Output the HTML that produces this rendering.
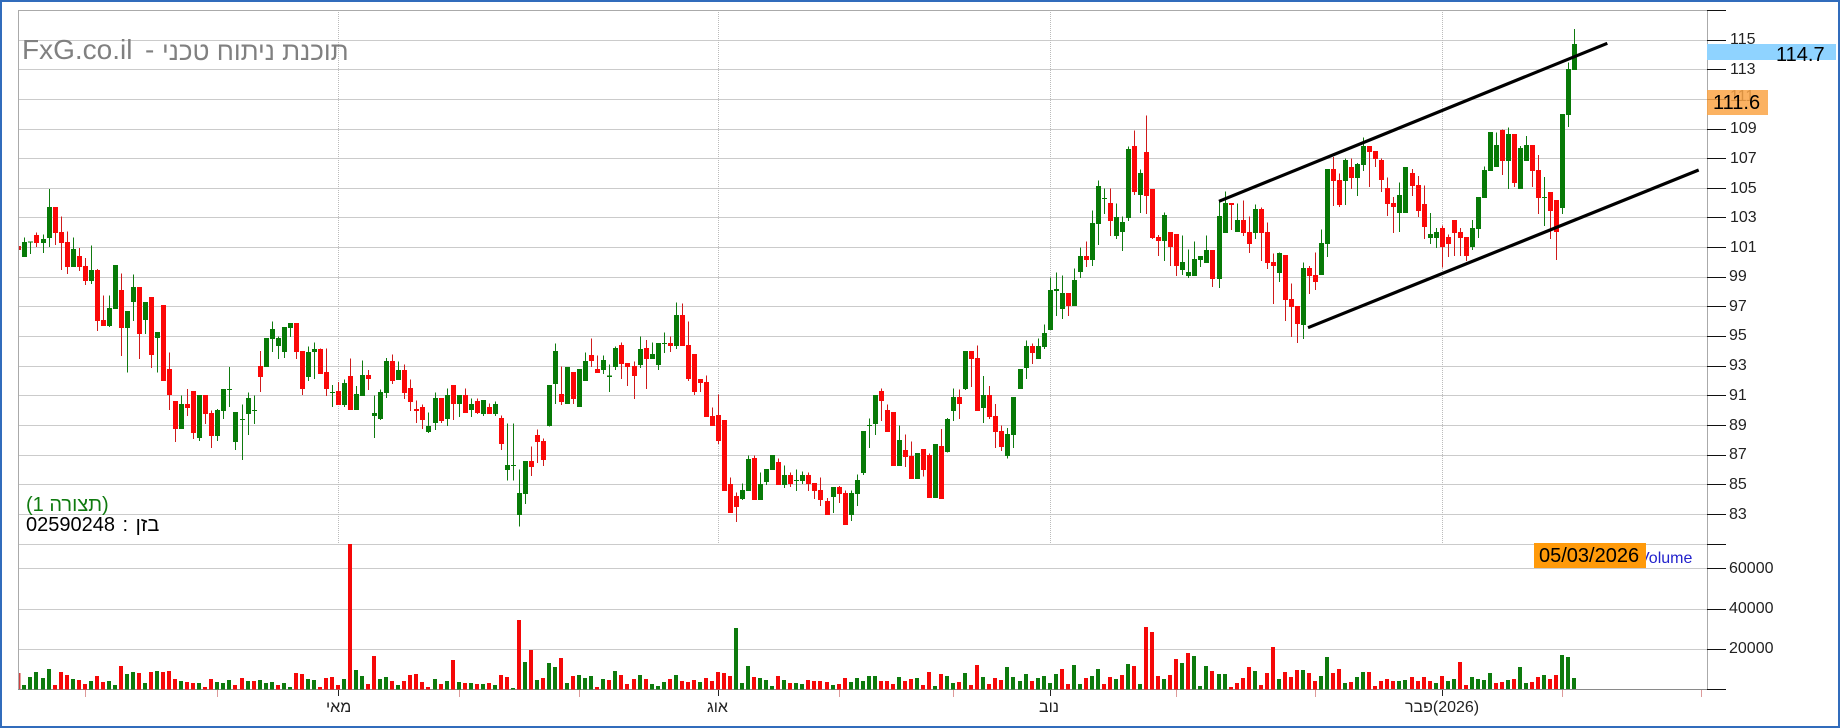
<!DOCTYPE html>
<html lang="he"><head><meta charset="utf-8"><title>FxG.co.il</title>
<style>
html,body{margin:0;padding:0;background:#fff}
#w{position:relative;width:1840px;height:728px;overflow:hidden;background:#fff;font-family:"Liberation Sans","Noto Sans CJK JP",sans-serif}
#f{position:absolute;left:0;top:0;width:1840px;height:728px;box-sizing:border-box;border:2px solid #316cbc}
svg{position:absolute;left:0;top:0}
.t{position:absolute;white-space:nowrap;line-height:24px;height:24px;color:#222;font-size:16px}
.b{position:absolute}
</style></head><body><div id="w">
<svg width="1840" height="728" viewBox="0 0 1840 728" fill="none">
<path shape-rendering="crispEdges" stroke="#cbcbcb" d="M18 40.5H1707M18 69.5H1707M18 99.5H1707M18 129.5H1707M18 158.5H1707M18 188.5H1707M18 217.5H1707M18 247.5H1707M18 277.5H1707M18 306.5H1707M18 336.5H1707M18 366.5H1707M18 395.5H1707M18 425.5H1707M18 455.5H1707M18 484.5H1707M18 514.5H1707M18 544.5H1707M18 568.5H1707M18 609.5H1707M18 649.5H1707"/>
<path shape-rendering="crispEdges" stroke="#bbb" stroke-dasharray="1 1" d="M338.5 10V544M718.5 10V544M1050.5 10V544M1442.5 10V544"/>
<path shape-rendering="crispEdges" stroke="#aaa" d="M18 10.5H1707M18.5 10V689M1707.5 10V689"/>
<path shape-rendering="crispEdges" stroke="#8a8a8a" d="M18 689.5H1707"/>
<path shape-rendering="crispEdges" stroke="#111" d="M1707 10.5H1726M1707 40.5H1726M1707 69.5H1726M1707 99.5H1726M1707 129.5H1726M1707 158.5H1726M1707 188.5H1726M1707 217.5H1726M1707 247.5H1726M1707 277.5H1726M1707 306.5H1726M1707 336.5H1726M1707 366.5H1726M1707 395.5H1726M1707 425.5H1726M1707 455.5H1726M1707 484.5H1726M1707 514.5H1726M1707 544.5H1726M1707 568.5H1726M1707 609.5H1726M1707 649.5H1726M1707 689.5H1726"/>
<path shape-rendering="crispEdges" stroke="#d99" d="M85.5 690V697M217.5 690V697M459.5 690V697M579.5 690V697M839.5 690V697M953.5 690V697M1176.5 690V697M1315.5 690V697M1562.5 690V697M1701.5 690V697"/>
<path shape-rendering="crispEdges" stroke="#222" stroke-width="1.4" d="M338.5 690V696M718.5 690V696M1050.5 690V696M1442.5 690V696"/>

<!-- candles A -->
<g transform="translate(.187 0) scale(.33333)" shape-rendering="crispEdges">
<path stroke="#0f7a0f" stroke-width="3" d="M73 712V771M91 724V762M130 703V759M148 567V741M220 712V801M274 736V852M328 886V981M382 933V1118M400 823V963M436 906V1002M472 996V1118M544 1186V1287M598 1185V1323M652 1227V1323M670 1167V1257M688 1101V1221M706 1236V1350M727 1213V1380M745 1177V1305M763 1186V1272M817 964V1056M835 1009V1077M853 981V1074M871 969V1011"/>
<path stroke="#077a07" stroke-width="15" d="M73 726V771M91 725V728M130 717V729M148 621V714M220 747V801M274 810V843M328 924V978M346 795V927M382 933V984M400 861V906M436 906V960M472 996V1014M544 1212V1287M598 1185V1314M652 1230V1308M670 1167V1233M688 1167V1170M706 1236V1326M727 1257V1260M745 1194V1242M763 1230V1233M799 1014V1101M817 987V1017M835 1014V1038M853 981V1056M871 969V984"/>
<path stroke="#cf1a1a" stroke-width="3" d="M109 697V741M166 621V735M184 649V810M202 694V822M238 744V813M256 774V855M292 807V993M310 886V978M364 820V1068M418 861V1077M454 891V1104M508 1057V1230M526 1203V1326M562 1167V1248M580 1173V1317M616 1185V1272M634 1231V1344M781 1053V1176M889 969V1077"/>
<path stroke="#fb0808" stroke-width="15" d="M109 705V729M166 621V699M184 696V729M202 726V801M238 768V801M256 798V843M292 810V963M310 960V978M364 870V984M418 861V1002M454 891V1065M490 915V1143M508 1107V1185M526 1203V1287M562 1212V1224M580 1173V1299M616 1185V1242M634 1239V1308M781 1098V1131M889 969V1056"/>
</g>
<rect x="19" y="246" width="2" height="4" fill="#d82020"/>
<!-- candles B -->
<g transform="translate(230.187 300) scale(.33333)" shape-rendering="crispEdges">
<path stroke="#0f7a0f" stroke-width="3" d="M235 139V243M253 127V237M307 255V321M343 238V321M379 258V330M397 181V288M433 286V414M451 268V360M469 174V294M505 184V240M595 337V399M616 277V390M652 265V378M688 285V351M724 295V351M760 300V348M796 304V348"/>
<path stroke="#077a07" stroke-width="15" d="M235 156V231M253 147V156M307 276V279M343 249V315M379 282V330M397 225V288M433 339V348M451 276V357M469 183V279M505 210V240M595 378V396M616 294V369M652 285V357M688 285V312M724 312V330M760 300V342M796 312V342"/>
<path stroke="#cf1a1a" stroke-width="3" d="M217 153V285M271 145V222M289 145V288M325 246V315M361 175V330M415 210V270M487 163V252M523 193V297M541 238V333M559 301V369M577 313V387M634 294V369M670 255V360M706 265V339M742 295V342M778 310V342M814 346V450"/>
<path stroke="#fb0808" stroke-width="15" d="M217 153V267M271 147V222M289 216V267M325 273V315M361 228V330M415 225V237M487 183V243M523 210V279M541 264V306M559 327V333M577 321V360M634 294V363M670 255V312M706 285V339M742 303V339M778 321V342M814 354V432"/>
</g>
<!-- candles C -->
<g transform="translate(460.187 250) scale(.33333)" shape-rendering="crispEdges">
<path stroke="#0f7a0f" stroke-width="3" d="M142 520V691M160 520V691M178 658V830M196 633V762M268 405V530M286 280V462M322 351V462M358 357V471M376 307V393M430 316V372M448 343V426M466 289V360M541 259V354M577 277V327M595 279V360M613 247V309M649 157V297M847 700V750M865 616V723M901 667V750M919 657V705M937 615V660M973 646V714M1009 658V723M1027 664V702M1120 711V789M1174 721V813M1192 673V768M1210 543V675M1228 505V594M1246 435V555M1318 526V648M1372 609V687"/>
<path stroke="#077a07" stroke-width="15" d="M142 645V660M160 645V648M178 729V795M196 633V732M268 405V528M286 303V402M322 351V462M358 357V471M376 333V393M430 330V360M448 376V381M466 294V351M541 297V345M577 312V327M595 279V345M613 279V282M649 195V288M847 720V747M865 627V723M901 702V750M919 657V696M937 615V660M973 675V705M1009 690V693M1027 675V693M1120 711V741M1174 729V795M1192 690V732M1210 543V669M1228 525V528M1246 435V522M1318 570V648M1372 609V687"/>
<path stroke="#cf1a1a" stroke-width="3" d="M214 589V678M232 538V639M250 565V648M304 349V465M340 366V462M394 265V351M412 316V369M484 277V387M502 339V408M523 334V447M559 270V417M631 259V306M667 160V288M685 214V393M703 312V435M721 387V426M739 376V501M757 472V528M775 433V582M793 510V723M811 682V789M829 727V816M883 616V750M955 625V705M991 667V711M1045 667V723M1063 699V747M1081 682V768M1102 744V795M1138 708V759M1156 721V825M1264 415V513M1282 463V546M1300 486V648M1336 553V651M1354 574V687"/>
<path stroke="#fb0808" stroke-width="15" d="M214 633V651M232 555V576M250 573V630M304 432V456M340 366V447M394 315V333M412 357V369M484 285V342M502 339V351M523 348V378M559 294V327M631 279V288M667 195V288M685 285V387M703 312V426M721 387V399M739 396V501M757 498V528M775 495V573M793 510V723M811 702V789M829 738V771M883 624V750M955 636V705M991 675V702M1045 675V702M1063 699V723M1081 720V750M1102 753V795M1138 711V732M1156 729V825M1264 423V453M1282 480V546M1300 486V648M1336 600V621M1354 618V687"/>
</g>
<!-- candles D -->
<g transform="translate(920.187 100) scale(.33333)" shape-rendering="crispEdges">
<path stroke="#0f7a0f" stroke-width="3" d="M46 1032V1194M82 954V1058M100 865V963M136 753V870M190 828V969M262 984V1076M280 891V1044M301 807V867M319 721V837M355 715V777M373 673V747M391 533V690M409 517V648M427 526V657M463 505V618M481 443V534M517 331V498M535 241V435M553 265V342M589 310V417M607 349V453M625 139V363M661 208V339M733 337V483M787 406V525M805 448V534M823 424V528M841 468V501M859 406V489M898 303V564M916 274V399M952 310V396M1006 313V417M1078 457V546M1150 487V717M1204 388V525M1222 207V471M1276 175V315M1312 189V288M1330 112V213"/>
<path stroke="#077a07" stroke-width="15" d="M46 1032V1194M82 957V1056M100 891V933M136 753V867M190 885V924M262 1002V1068M280 891V1005M301 807V867M319 738V804M355 738V777M373 699V741M391 570V690M409 567V573M427 579V627M463 540V618M481 468V516M517 369V480M535 258V372M553 294V297M589 351V408M607 366V396M625 147V354M661 219V285M733 345V423M787 486V510M805 516V528M823 477V528M841 468V480M859 450V489M898 348V537M916 309V399M952 360V396M1006 327V399M1078 459V519M1150 504V675M1204 429V525M1222 207V432M1276 180V243M1312 192V234M1330 138V195"/>
<path stroke="#cf1a1a" stroke-width="3" d="M10 1047V1130M28 1060V1194M64 987V1197M118 868V957M154 753V861M172 736V933M208 858V957M226 912V1044M244 976V1053M337 730V792M445 579V648M499 424V501M571 265V408M643 91V285M679 46V342M697 267V417M715 405V468M751 396V498M769 402V528M877 450V561M934 309V390M970 301V408M988 349V459M1024 322V483M1042 367V507M1060 460V612M1096 465V663M1114 550V711M1132 618V729M1168 498V582M1186 457V570M1240 171V318M1258 220V321M1294 175V267M1348 138V261M1366 153V201"/>
<path stroke="#fb0808" stroke-width="15" d="M10 1047V1110M28 1065V1194M64 1038V1197M118 891V912M154 753V777M172 774V933M208 885V951M226 948V996M244 993V1041M337 738V759M445 579V618M499 468V480M571 309V363M643 138V276M679 156V288M697 267V414M715 411V423M751 396V441M769 402V498M877 450V537M934 309V315M970 360V399M988 396V432M1024 327V399M1042 396V489M1060 486V498M1096 465V600M1114 597V621M1132 618V672M1168 504V528M1186 525V546M1240 207V243M1258 240V315M1294 201V234M1348 138V156M1366 153V177"/>
</g>
<!-- candles E -->
<g transform="translate(1380.187 0) scale(.33333)" shape-rendering="crispEdges">
<path stroke="#0f7a0f" stroke-width="3" d="M58 547V696M76 501V639M151 639V732M169 684V744M277 660V750M295 591V714M313 500V594M331 396V513M349 397V501M385 382V567M421 438V567M439 408V483M493 531V678M547 342V642M565 187V381M583 87V210"/>
<path stroke="#077a07" stroke-width="15" d="M58 585V639M76 501V639M151 702V714M169 696V714M277 684V741M295 591V687M313 510V594M331 396V513M349 435V501M385 402V483M421 444V567M439 435V483M493 591V594M547 342V624M565 207V345M583 132V210"/>
<path stroke="#cf1a1a" stroke-width="3" d="M4 476V576M22 532V648M40 591V699M97 507V588M115 528V651M133 556V717M187 676V802M205 703V771M223 660V768M241 684V768M259 711V783M367 388V525M403 402V561M457 435V561M475 465V642M511 576V717M529 600V780"/>
<path stroke="#fb0808" stroke-width="15" d="M4 480V540M22 564V612M40 609V621M97 519V558M115 555V633M133 612V681M187 684V741M205 711V732M223 660V699M241 696V714M259 711V768M367 390V483M403 402V549M457 435V513M475 510V594M511 576V633M529 600V696"/>
</g>

<!-- volume -->
<rect x="19" y="673" width="1.5" height="16" fill="#d04040"/>
<g transform="translate(.02 480) scale(.33333)" shape-rendering="crispEdges" stroke-width="12">
<path stroke="#0d7a0d" d="M72 628V615M90 628V591M108 628V576M129 628V594M147 628V567M219 628V597M273 628V603M327 628V603M345 628V615M381 628V582M399 628V576M435 628V609M471 628V573M543 628V603M597 628V609M651 628V606M669 628V609M687 628V600M744 628V603M780 628V600M798 628V609M816 628V606M852 628V609M870 628V621M924 628V597M942 628V600M1032 628V597M1068 628V570M1086 628V588M1140 628V597M1158 628V591M1194 628V615M1305 628V597M1341 628V603M1377 628V606"/>
<path stroke="#f50808" d="M165 628V615M183 628V576M201 628V585M237 628V600M255 628V612M291 628V588M309 628V606M363 628V558M417 628V579M453 628V576M489 628V576M507 628V573M525 628V597M561 628V606M579 628V609M615 628V621M633 628V597M705 628V615M726 628V594M762 628V603M834 628V615M888 628V579M906 628V582M960 628V621M978 628V594M996 628V591M1014 628V615M1050 628V192M1104 628V612M1122 628V528M1176 628V603M1212 628V603M1230 628V585M1248 628V582M1266 628V606M1284 628V621M1323 628V612M1359 628V540"/>
</g>
<g transform="translate(460.02 530) scale(.33333)" shape-rendering="crispEdges" stroke-width="12">
<path stroke="#0d7a0d" d="M33 478V459M69 478V462M105 478V465M159 478V474M195 478V396M231 478V450M267 478V399M285 478V411M321 478V459M357 478V435M375 478V444M393 478V438M429 478V447M465 478V423M540 478V435M576 478V462M594 478V468M612 478V456M648 478V435M720 478V456M828 478V294M846 478V459M864 478V408M900 478V444M918 478V450M936 478V468M972 478V450M1008 478V459M1026 478V462M1119 478V465M1173 478V456M1191 478V444M1209 478V453M1227 478V438M1245 478V438M1317 478V441M1371 478V444"/>
<path stroke="#f50808" d="M15 478V459M51 478V462M87 478V459M123 478V435M141 478V441M177 478V270M213 478V360M249 478V444M303 478V384M339 478V438M411 478V471M447 478V450M483 478V435M501 478V462M522 478V447M558 478V447M630 478V447M666 478V453M684 478V456M702 478V450M738 478V444M756 478V453M774 478V426M792 478V429M810 478V438M882 478V441M954 478V438M990 478V459M1044 478V450M1062 478V453M1080 478V453M1101 478V456M1137 478V462M1155 478V444M1263 478V453M1281 478V453M1299 478V462M1335 478V453M1353 478V447"/>
</g>
<g transform="translate(920.02 530) scale(.33333)" shape-rendering="crispEdges" stroke-width="12">
<path stroke="#0d7a0d" d="M45 478V468M81 478V438M99 478V459M135 478V429M189 478V441M261 478V411M279 478V441M300 478V453M318 478V432M354 478V444M372 478V438M390 478V459M408 478V432M462 478V405M480 478V462M516 478V438M534 478V417M588 478V447M624 478V402M660 478V462M732 478V447M786 478V399M822 478V378M840 478V468M858 478V408M897 478V432M915 478V432M1005 478V423M1077 478V447M1149 478V420M1203 478V438M1221 478V381M1275 478V459M1311 478V441M1329 478V426"/>
<path stroke="#f50808" d="M9 478V465M27 478V426M63 478V432M117 478V456M153 478V465M171 478V405M207 478V462M225 478V444M243 478V450M336 478V453M426 478V417M444 478V462M498 478V444M552 478V462M570 478V441M606 478V435M642 478V408M678 478V291M696 478V306M714 478V438M750 478V435M768 478V387M804 478V369M876 478V423M933 478V471M951 478V459M969 478V444M987 478V411M1023 478V465M1041 478V429M1059 478V351M1095 478V426M1113 478V441M1131 478V420M1167 478V429M1185 478V453M1239 478V429M1257 478V417M1293 478V456M1347 478V426M1365 478V468"/>
</g>
<g transform="translate(1380.02 520) scale(.33333)" shape-rendering="crispEdges" stroke-width="12">
<path stroke="#0d7a0d" d="M57 507V483M75 507V480M168 507V489M204 507V483M222 507V477M276 507V471M294 507V477M312 507V480M330 507V459M384 507V480M420 507V441M438 507V489M492 507V465M546 507V405M564 507V411M582 507V474"/>
<path stroke="#f50808" d="M3 507V483M21 507V477M39 507V483M96 507V471M114 507V483M132 507V471M150 507V483M186 507V468M240 507V426M258 507V495M348 507V489M366 507V486M402 507V477M456 507V486M474 507V471M510 507V477M528 507V465"/>
</g>

<!-- trendlines -->
<path stroke="#000" stroke-width="3.2" d="M1219 201.3L1607.3 43.3M1308 327.7L1698.7 170"/>
</svg>

<div class="t" style="left:22px;top:35px;height:30px;line-height:30px;font-size:28px;color:#808080">FxG.co.il</div>
<div class="t" style="left:145px;top:35px;height:30px;line-height:30px;font-size:28px;color:#808080">-</div>
<div class="t" style="left:162px;top:36px;height:30px;line-height:30px;font-size:26px;color:#808080"><bdi>תוכנת ניתוח טכני</bdi></div>
<div class="t" dir="rtl" style="left:26px;top:493px;font-size:20px;color:#0f7a0f">(תצורה 1)</div>
<div class="t" style="left:26px;top:513px;font-size:20px;color:#000;word-spacing:2px">02590248 : <bdi>בזן</bdi></div>

<div class="t" style="left:1730px;top:28px">115</div>
<div class="t" style="left:1730px;top:58px">113</div>
<div class="t" style="left:1730px;top:85px">111</div>
<div class="t" style="left:1730px;top:117px">109</div>
<div class="t" style="left:1730px;top:147px">107</div>
<div class="t" style="left:1730px;top:177px">105</div>
<div class="t" style="left:1730px;top:206px">103</div>
<div class="t" style="left:1730px;top:236px">101</div>
<div class="t" style="left:1729px;top:265px">99</div>
<div class="t" style="left:1729px;top:295px">97</div>
<div class="t" style="left:1729px;top:324px">95</div>
<div class="t" style="left:1729px;top:354px">93</div>
<div class="t" style="left:1729px;top:384px">91</div>
<div class="t" style="left:1729px;top:414px">89</div>
<div class="t" style="left:1729px;top:443px">87</div>
<div class="t" style="left:1729px;top:473px">85</div>
<div class="t" style="left:1729px;top:503px">83</div>

<div class="b" style="left:1707px;top:44px;width:129px;height:16px;background:#8fd3ff"></div>
<div class="t" style="left:1776px;top:43px;font-size:20px;color:#000">114.7</div>
<div class="b" style="left:1707px;top:90px;width:61px;height:25px;background:rgba(250,165,70,.85)"></div>
<div class="t" style="left:1713px;top:91px;font-size:20px;color:#000">111.6</div>

<div class="t" style="left:1639px;top:547px;color:#2222cc">Volume</div>
<div class="b" style="left:1534px;top:543px;width:112px;height:25px;background:#ff9a0a"></div>
<div class="t" style="left:1539px;top:544px;font-size:20px;color:#000">05/03/2026</div>
<div class="t" style="left:1729px;top:557px">60000</div>
<div class="t" style="left:1729px;top:597px">40000</div>
<div class="t" style="left:1729px;top:637px">20000</div>

<div class="t" style="left:326px;top:696px">מאי</div>
<div class="t" style="left:707px;top:696px">אוג</div>
<div class="t" style="left:1039px;top:696px">נוב</div>
<div class="t" style="left:1405px;top:696px"><bdi>פבר</bdi>(2026)</div>
<div id="f"></div>
</div></body></html>
